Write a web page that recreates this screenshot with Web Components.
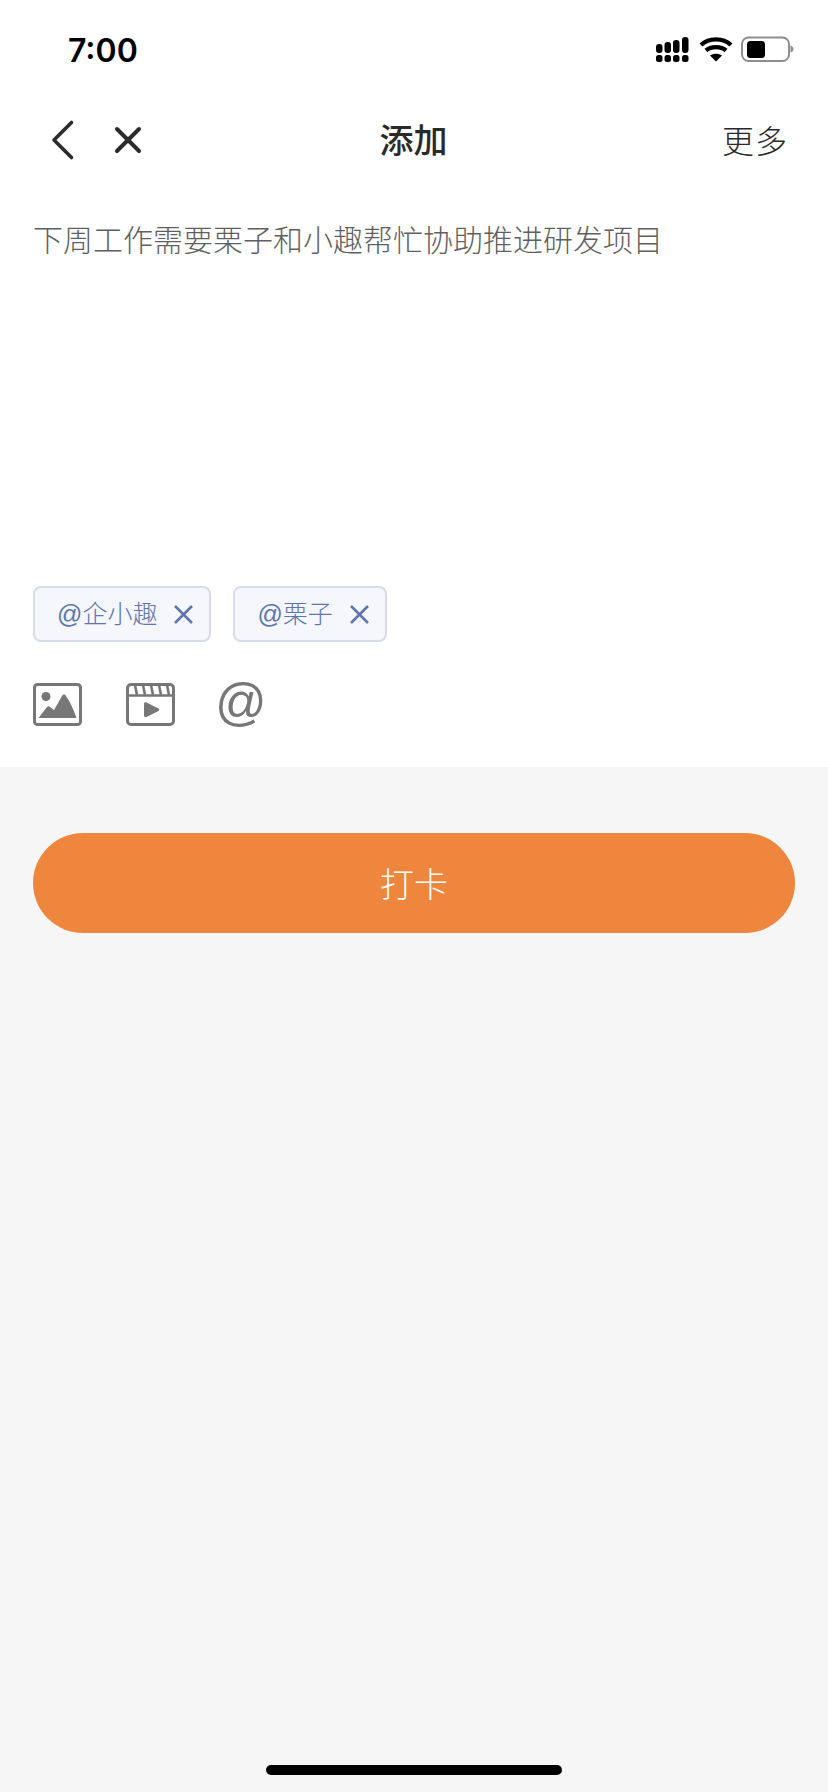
<!DOCTYPE html>
<html lang="zh">
<head>
<meta charset="utf-8">
<title>添加</title>
<style>
	html, body { margin: 0; padding: 0; background: #f6f6f6; }
	body { font-family: "Liberation Sans", "Noto Sans CJK SC", sans-serif; }
</style>
</head>
<body>
<add-page>
	<status-bar time="7:00"></status-bar>
	<nav-bar title="添加" action="更多"></nav-bar>
	<note-editor text="下周工作需要栗子和小趣帮忙协助推进研发项目">
		<mention-tag>@企小趣</mention-tag>
		<mention-tag>@栗子</mention-tag>
	</note-editor>
	<punch-button>打卡</punch-button>
	<home-bar></home-bar>
</add-page>

<script>
class AddPage extends HTMLElement {
	constructor() {
		super();
		this.attachShadow({ mode: 'open' });
		this.shadowRoot.innerHTML = `
		<style>
			:host {
				display: flex;
				flex-direction: column;
				width: 828px;
				height: 1792px;
				background: #f6f6f6;
				overflow: hidden;
			}
		</style>
		<slot></slot>
		`;
	}
}
customElements.define('add-page', AddPage);

class StatusBar extends HTMLElement {
	constructor() {
		super();
		this.attachShadow({ mode: 'open' });
		this.shadowRoot.innerHTML = `
		<style>
			:host {
				display: flex;
				align-items: center;
				justify-content: space-between;
				box-sizing: border-box;
				height: 100px;
				padding: 0 34px 0 68px;
				background: #fff;
				color: #000;
			}
			.time {
				margin-top: 2px;
				font: 600 32px/1 Inter, "Liberation Sans", sans-serif;
			}
			.icons { display: flex; }
			svg { display: block; }
		</style>
		<div class="time"></div>
		<div class="icons">
			<svg width="140" height="30" viewBox="0 0 140 30">
				<g fill="#000">
					<rect x="2" y="9" width="6.500" height="9" rx="3"/>
					<rect x="10.500" y="7" width="6.500" height="11" rx="3"/>
					<rect x="19" y="5" width="6.500" height="13" rx="3"/>
					<rect x="28" y="2" width="6.500" height="16" rx="3"/>
					<rect x="2" y="20" width="6.500" height="7" rx="2.500"/>
					<rect x="10.500" y="20" width="6.500" height="7" rx="2.500"/>
					<rect x="19" y="20" width="6.500" height="7" rx="2.500"/>
					<rect x="28" y="20" width="6.500" height="7" rx="2.500"/>
				</g>
				<g fill="none" stroke="#000" stroke-width="4.400">
					<path d="M47 10 C55 2.500 69 2.500 77 10"/>
					<path d="M52 15.500 C57 11 67 11 72 15.500"/>
				</g>
				<path d="M56 20.500 C59.500 18 64.500 18 68 20.500 L62 26.500 Z" fill="#000"/>
				<rect x="88" y="2.500" width="47" height="23.500" rx="6.500" fill="none" stroke="#8e8e8e" stroke-width="2"/>
				<rect x="93" y="6" width="18" height="17" rx="3.500" fill="#000"/>
				<path d="M136.500 10.500 C138.500 11 139.500 12.500 139.500 14 C139.500 15.500 138.500 17 136.500 17.500 Z" fill="#8e8e8e"/>
			</svg>
		</div>
		`;
	}

	connectedCallback() {
		this.shadowRoot.querySelector('.time').textContent = this.getAttribute('time');
	}
}
customElements.define('status-bar', StatusBar);

class NavBar extends HTMLElement {
	constructor() {
		super();
		this.attachShadow({ mode: 'open' });
		this.shadowRoot.innerHTML = `
		<style>
			:host {
				display: grid;
				grid-template-columns: 1fr auto 1fr;
				align-items: center;
				box-sizing: border-box;
				height: 80px;
				padding: 0 40px;
				background: #fff;
				color: #2a2a2a;
				font-family: "Noto Sans CJK SC", sans-serif;
			}
			.left { display: flex; align-items: center; gap: 38px; margin-left: 11px; }
			svg { display: block; }
			.title { margin: -3px 0 0 -1px; font-size: 34px; font-weight: 500; line-height: 48px; }
			.action { justify-self: end; margin-top: -3px; font-size: 32px; font-weight: 300; line-height: 48px; letter-spacing: 1px; }
		</style>
		<div class="left">
			<svg width="24" height="42" viewBox="0 0 24 42">
				<path d="M20.500 3.500 L3 21 L20.500 38.500" fill="none" stroke="#2b2b2b" stroke-width="3.600" stroke-linecap="round" stroke-linejoin="round"/>
			</svg>
			<svg width="30" height="30" viewBox="0 0 30 30">
				<path d="M4 4 L26 26 M26 4 L4 26" fill="none" stroke="#2b2b2b" stroke-width="4" stroke-linecap="round"/>
			</svg>
		</div>
		<div class="title"></div>
		<div class="action"></div>
		`;
	}

	connectedCallback() {
		this.shadowRoot.querySelector('.title').textContent = this.getAttribute('title');
		this.shadowRoot.querySelector('.action').textContent = this.getAttribute('action');
		this.removeAttribute('title');
	}
}
customElements.define('nav-bar', NavBar);

class MentionTag extends HTMLElement {
	constructor() {
		super();
		this.attachShadow({ mode: 'open' });
		this.shadowRoot.innerHTML = `
		<style>
			:host {
				display: flex;
				align-items: center;
				gap: 16px;
				box-sizing: border-box;
				height: 56px;
				padding: 0 15px 0 22px;
				background: #f5f7fc;
				border: 2px solid #d6dcec;
				border-radius: 8px;
				color: #5d76ad;
				font: 300 25px/36px "Liberation Sans", "Noto Sans CJK SC", sans-serif;
			}
			svg { display: block; }
		</style>
		<slot></slot>
		<svg width="21" height="21" viewBox="0 0 21 21">
			<path d="M2 2 L19 19 M19 2 L2 19" fill="none" stroke="#5d76ad" stroke-width="2.600"/>
		</svg>
		`;
	}
}
customElements.define('mention-tag', MentionTag);

class NoteEditor extends HTMLElement {
	constructor() {
		super();
		this.attachShadow({ mode: 'open' });
		this.shadowRoot.innerHTML = `
		<style>
			:host {
				display: flex;
				flex-direction: column;
				box-sizing: border-box;
				height: 587px;
				padding: 0 33px;
				background: #fff;
			}
			.text {
				flex: 1;
				padding-top: 36px;
				color: #5f5f5f;
				font: 300 30px/44px "Noto Sans CJK SC", sans-serif;
			}
			.tags { display: flex; gap: 22px; }
			.tools { display: flex; align-items: center; height: 43px; margin: 41px 0 41px; }
			svg { display: block; }
			.clip { margin-left: 44px; }
			.sign {
				margin-left: 40px;
				margin-top: -4px;
				color: #777;
				font: 300 51px/43px "Liberation Sans", sans-serif;
			}
		</style>
		<div class="text"></div>
		<div class="tags"><slot></slot></div>
		<div class="tools">
			<svg width="49" height="43" viewBox="0 0 49 43">
				<rect x="1.500" y="1.500" width="46" height="40" rx="3" fill="none" stroke="#777" stroke-width="3"/>
				<circle cx="13" cy="13.500" r="4.500" fill="#777"/>
				<path d="M5.500 35 L14 24 C15 23 16 23 17 24 L21 27 L29 13 C30 11 32 11 33 13 C38 20 41 28 43.500 35 Z" fill="#777"/>
			</svg>
			<svg class="clip" width="49" height="43" viewBox="0 0 49 43">
				<rect x="1.500" y="1.500" width="46" height="40" rx="3.500" fill="none" stroke="#777" stroke-width="3"/>
				<path d="M1.500 12.500 H47.500 M9 2 L11 12 M17 2 L19 12 M25 2 L27 12 M33 2 L35 12 M41 2 L43 12" fill="none" stroke="#777" stroke-width="2.600"/>
				<path d="M18 21 C18 19.500 19 19 20.500 19.500 L32.500 25.500 C33.500 26.300 33.500 27.100 32.500 27.900 L20.500 33.900 C19 34.500 18 34 18 32.500 Z" fill="#777"/>
			</svg>
			<div class="sign">@</div>
		</div>
		`;
	}

	connectedCallback() {
		this.shadowRoot.querySelector('.text').textContent = this.getAttribute('text');
	}
}
customElements.define('note-editor', NoteEditor);

class PunchButton extends HTMLElement {
	constructor() {
		super();
		this.attachShadow({ mode: 'open' });
		this.shadowRoot.innerHTML = `
		<style>
			:host {
				display: flex;
				align-items: center;
				justify-content: center;
				box-sizing: border-box;
				height: 100px;
				margin: 66px 33px 0;
				background: #ee873d;
				border-radius: 50px;
				color: #fff;
				font: 300 34px/48px "Noto Sans CJK SC", sans-serif;
			}
		</style>
		<slot></slot>
		`;
	}
}
customElements.define('punch-button', PunchButton);

class HomeBar extends HTMLElement {
	constructor() {
		super();
		this.attachShadow({ mode: 'open' });
		this.shadowRoot.innerHTML = `
		<style>
			:host {
				display: block;
				width: 296px;
				height: 10px;
				margin: auto auto 17px;
				background: #000;
				border-radius: 5px;
			}
		</style>
		`;
	}
}
customElements.define('home-bar', HomeBar);
</script>
</body>
</html>
